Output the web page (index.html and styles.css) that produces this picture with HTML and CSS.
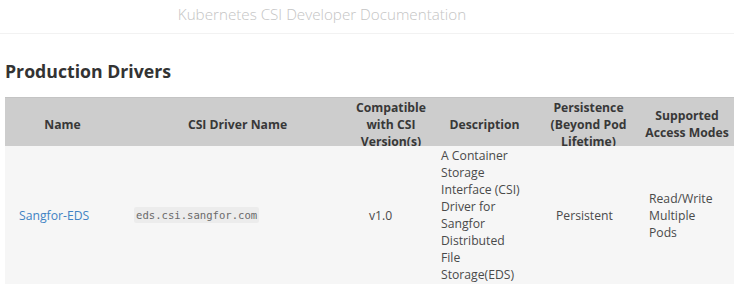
FILE: index.html
```html
<!DOCTYPE html>
<html lang="en">
<head>
    <meta charset="UTF-8">
    <meta name="viewport" content="width=device-width, initial-scale=1.0">
    <title>Production Drivers - Kubernetes CSI Developer Documentation</title>
    <link rel="stylesheet" href="styles.css">
</head>
<body>

    <div class="menu-bar">
        <h1 class="menu-title">Kubernetes CSI Developer Documentation</h1>
    </div>

    <main class="content">
        <h2>Production Drivers</h2>

        <table class="drivers">
            <colgroup>
                <col class="c-name">
                <col class="c-csi">
                <col class="c-ver">
                <col class="c-desc">
                <col class="c-pers">
                <col class="c-modes">
            </colgroup>
            <thead>
                <tr>
                    <th><div class="clip"><div class="clip-in">Name</div></div></th>
                    <th><div class="clip"><div class="clip-in">CSI Driver Name</div></div></th>
                    <th><div class="clip"><div class="clip-in">Compatible with CSI Version(s)</div></div></th>
                    <th><div class="clip"><div class="clip-in">Description</div></div></th>
                    <th><div class="clip"><div class="clip-in">Persistence (Beyond Pod Lifetime)</div></div></th>
                    <th><div class="clip"><div class="clip-in">Supported Access Modes</div></div></th>
                </tr>
            </thead>
            <tbody>
                <tr>
                    <td><a href="#">Sangfor-EDS</a></td>
                    <td><code>eds.csi.sangfor.com</code></td>
                    <td>v1.0</td>
                    <td>A Container Storage Interface (CSI) Driver for Sangfor Distributed File Storage(EDS)</td>
                    <td>Persistent</td>
                    <td>Read/Write Multiple Pods</td>
                </tr>
            </tbody>
        </table>
    </main>

</body>
</html>
```

FILE: styles.css
```css
html, body{
    margin: 0;
    padding: 0;
    overflow: hidden;
    background: #fff;
}

body{
    font-family: 'Open Sans', 'Liberation Sans', sans-serif;
    color: #3a3a3a;
}

.menu-bar{
    display: flex;
    justify-content: center;
    height: 33px;
    padding-right: 90px;
    border-bottom: 1px solid #f2f2f2;
}

.menu-title{
    margin: 0;
    font-size: 15.2px;
    font-weight: 300;
    line-height: 28px;
    color: #c4c4c4;
}

.content{
    padding: 26px 0 0 5px;
}

h2{
    margin: 0 0 15px;
    font-size: 17.7px;
    line-height: 22px;
    font-weight: 700;
    color: #333;
}

.drivers{
    table-layout: fixed;
    width: 734px;
    border-collapse: collapse;
    font-size: 12.2px;
    line-height: 17px;
}

.c-name{ width: 115px; }
.c-csi{ width: 235px; }
.c-ver{ width: 72px; }
.c-desc{ width: 115px; }
.c-pers{ width: 93px; }
.c-modes{ width: 104px; }

.drivers thead tr{
    background: #cdcdcd;
    border-top: 1px solid #c4c4c4;
}

.drivers th{
    padding: 0;
    font-weight: 700;
    text-align: center;
    color: #383838;
}

/* header text runs under the body row, as in the docs page */
.clip{
    height: 48px;
    overflow-x: visible;
    overflow-y: clip;
}

.clip-in{
    height: 52px;
    display: flex;
    flex-direction: column;
    justify-content: center;
}

.drivers tbody tr{
    background: #f6f6f6;
}

.drivers td{
    padding: 1px 22px 2px 14px;
    vertical-align: middle;
    text-align: left;
    color: #4a4a4a;
}

.drivers a{
    color: #4183c4;
    text-decoration: none;
}

code{
    font-family: 'DejaVu Sans Mono', 'Liberation Mono', monospace;
    font-size: 10.6px;
    padding: 2px 2px;
    background: #ececec;
    color: #6a6a6a;
    border-radius: 2px;
}
```
